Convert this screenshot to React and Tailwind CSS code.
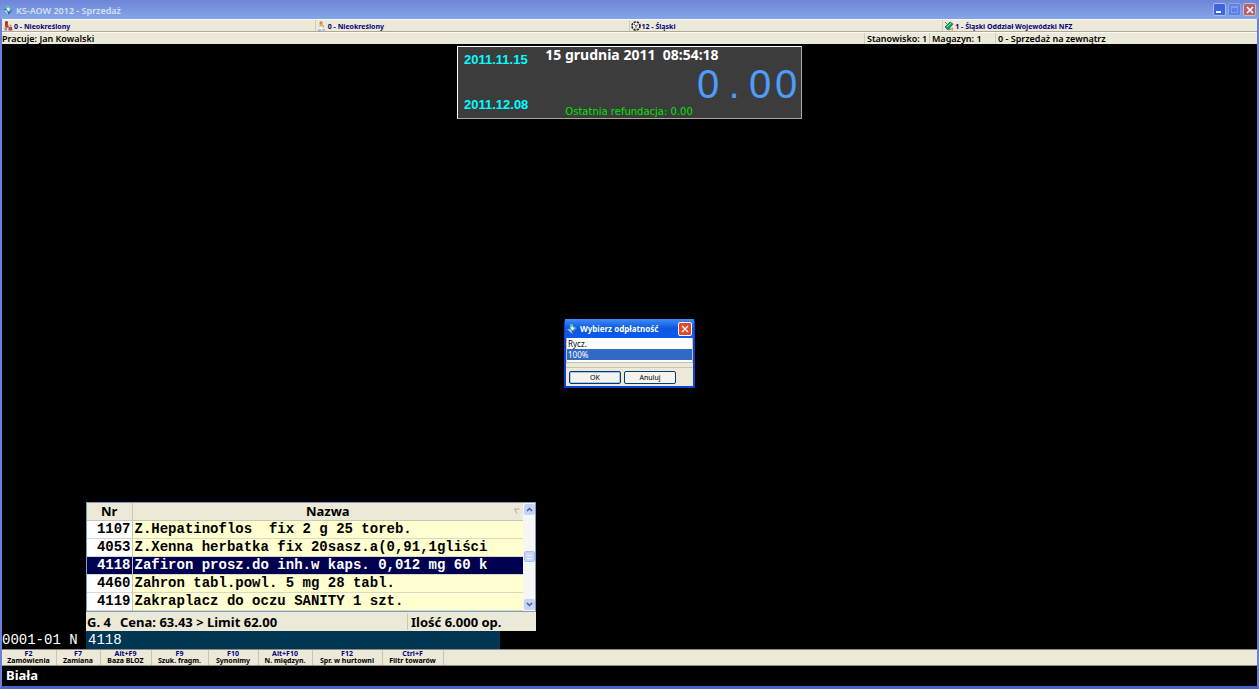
import React, { useState } from 'react'
import clsx from 'clsx'

const statusItems = [
  { icon: 'people', text: '0 - Nieokreślony' },
  { icon: 'person', text: '0 - Nieokreślony' },
  { icon: 'wheel', text: '12 - Śląski' },
  { icon: 'branch', text: '1 - Śląski Oddział Wojewódzki NFZ' },
]

const products = [
  { nr: '1107', name: 'Z.Hepatinoflos  fix 2 g 25 toreb.' },
  { nr: '4053', name: 'Z.Xenna herbatka fix 20sasz.a(0,91,1gliści' },
  { nr: '4118', name: 'Zafiron prosz.do inh.w kaps. 0,012 mg 60 k' },
  { nr: '4460', name: 'Zahron tabl.powl. 5 mg 28 tabl.' },
  { nr: '4119', name: 'Zakraplacz do oczu SANITY 1 szt.' },
]

const shortcuts = [
  { key: 'F2', label: 'Zamówienia', width: 'w-[55px]' },
  { key: 'F7', label: 'Zamiana', width: 'w-[44px]' },
  { key: 'Alt+F9', label: 'Baza BLOZ', width: 'w-[51px]' },
  { key: 'F9', label: 'Szuk. fragm.', width: 'w-[57px]' },
  { key: 'F10', label: 'Synonimy', width: 'w-[50px]' },
  { key: 'Alt+F10', label: 'N. międzyn.', width: 'w-[54px]' },
  { key: 'F12', label: 'Spr. w hurtowni', width: 'w-[70px]' },
  { key: 'Ctrl+F', label: 'Filtr towarów', width: 'w-[61px]' },
]

const AppIcon = () => (
  <svg viewBox="0 0 10 10" className="h-[10px] w-[10px] shrink-0" aria-hidden="true">
    <path d="M0 5l4-2 6 1-4.500 6z" fill="#2a6299" />
    <path d="M0 5l4 .5 1.500 4.500z" fill="#b9d3ea" />
    <path d="M3 0h2.500l1 2.500L10 4 6 7 3 5z" fill="#58b5c0" />
    <path d="M3.500 3L6 2.500 7 5 5 6z" fill="#e8fafa" />
  </svg>
)

const StatusIcon = ({ name }) => (
  <svg viewBox="0 0 10 10" className="h-[10px] w-[10px] shrink-0" aria-hidden="true">
    {name === 'people' && (
      <>
        <circle cx="3.500" cy="1.700" r="1.600" fill="#8a3b2c" />
        <path d="M2 3h3l.8 3-1.800 1L2 6z" fill="#c23a30" />
        <path d="M1.500 6.500h2.500v3H1.500z" fill="#7d8fae" />
        <circle cx="7.500" cy="4.800" r="1.200" fill="#d99a72" />
        <path d="M5.500 6h3.500L9.500 9.500h-4z" fill="#b8443a" />
      </>
    )}
    {name === 'person' && (
      <>
        <circle cx="4" cy="1.800" r="1.600" fill="#c98b4a" />
        <path d="M2.500 3h3l2 3-2 1h-3z" fill="#e0a96f" />
        <path d="M2.500 5.500h3l1 3.500H2z" fill="#eef3ff" />
        <path d="M1 9.200h3M5 8.900h3" stroke="#7fb6ea" strokeWidth="1.4" />
      </>
    )}
    {name === 'wheel' && (
      <>
        <circle cx="5" cy="5" r="4" fill="#fff" stroke="#222" strokeWidth="1.700" strokeDasharray="2.200 1" />
        <path d="M5 5L3 3M5 5l2.300-1.500M5 5v2.500" stroke="#444" strokeWidth="0.9" />
      </>
    )}
    {name === 'branch' && (
      <>
        <path d="M1 6l5-5 3 2-5 6z" fill="#13a06a" stroke="#0b5b45" strokeWidth="0.7" />
        <path d="M3 6l4-4" stroke="#a8efcf" strokeWidth="0.8" />
        <path d="M1 1l2 2M5 9l4-2" stroke="#555" strokeWidth="0.8" />
        <path d="M7 7.500l2 2" stroke="#d9b832" strokeWidth="1.3" />
      </>
    )}
  </svg>
)

const TitleBar = () => (
  <header className="flex h-[19px] shrink-0 items-center rounded-t-md bg-linear-to-b from-[#6d86d8] via-[#7a96df] to-[#84a5e8] px-[3px]">
    <AppIcon />
    <h1 className="ml-[3px] pt-[2px] text-[9px] font-semibold text-[#d5e0f8]">KS-AOW 2012 - Sprzedaż</h1>
    <div className="ml-auto flex gap-[2px]">
      <button aria-label="Minimalizuj" className="flex h-[13px] w-[13px] items-end rounded-xs border border-[#a9bdf2] bg-[#3b66e0] p-[2px]">
        <span className="h-[2px] w-[5px] bg-white" />
      </button>
      <button aria-label="Maksymalizuj" className="flex h-[13px] w-[13px] items-center justify-center rounded-xs border border-[#8ba6ee] bg-[#5f80e2]">
        <span className="h-[7px] w-[7px] border border-t-2 border-[#819eee]" />
      </button>
      <button aria-label="Zamknij" className="flex h-[13px] w-[13px] items-center justify-center rounded-xs border border-[#d3b6d2] bg-[#b5626e]">
        <svg viewBox="0 0 8 8" className="h-[8px] w-[8px]">
          <path d="M1 1l6 6M7 1L1 7" stroke="#fff" strokeWidth="1.5" />
        </svg>
      </button>
    </div>
  </header>
)

const StatusBars = () => (
  <div className="shrink-0 bg-[#ece9d8]">
    <div className="grid h-[13px] grid-cols-4 border-t border-b border-t-[#fbfaf4] border-b-[#aca899] text-[7px] leading-[9px] font-bold text-[#000080]">
      {statusItems.map((item, i) => (
        <div key={i} className="flex h-[11px] items-center gap-px border-r border-[#d0ccba] pl-px whitespace-nowrap last:border-r-0">
          <StatusIcon name={item.icon} />
          <span className="pt-[2px]">{item.text}</span>
        </div>
      ))}
    </div>
    <div className="flex h-[12px] items-center border-t border-[#fbfaf4] text-[9px] leading-[11px] font-semibold whitespace-nowrap text-black">
      <div className="flex-1">Pracuje: Jan Kowalski</div>
      <div className="w-[65px] border-l border-[#d0ccba] pl-[2px]">Stanowisko: 1</div>
      <div className="w-[66px] border-l border-[#d0ccba] pl-[2px]">Magazyn: 1</div>
      <div className="w-[262px] border-l border-[#d0ccba] pl-[2px]">0 - Sprzedaż na zewnątrz</div>
    </div>
  </div>
)

const SummaryPanel = () => (
  <section className="mx-auto flex h-[73px] w-[345px] shrink-0 border border-t-white border-r-[#aca899] border-b-[#aca899] border-l-white bg-[#3c3c3c]">
    <div className="flex flex-col justify-between py-[5px] pl-[6px] font-['Liberation_Sans',sans-serif] text-[13px] leading-[16px] font-bold text-[#00ffff]">
      <span>2011.11.15</span>
      <span>2011.12.08</span>
    </div>
    <div className="flex flex-1 flex-col justify-between pl-[17px]">
      <p className="text-[14px] leading-[15px] font-bold whitespace-pre text-white">15 grudnia 2011  08:54:18</p>
      <p className="flex justify-end pr-[2px] font-['Liberation_Sans',sans-serif] text-[40px] leading-[38px] text-[#4c9dfc]">
        {'0.00'.split('').map((char, i) => (
          <span key={i} className="w-[26px] text-center">{char}</span>
        ))}
      </p>
      <p className="pl-[20px] font-['DejaVu_Sans',sans-serif] text-[10px] leading-[12px] text-[#00e600]">Ostatnia refundacja: 0.00</p>
    </div>
  </section>
)

const PaymentDialog = () => {
  const [selected, setSelected] = useState('100%')

  return (
    <div role="dialog" aria-label="Wybierz odpłatność" className="absolute inset-x-0 top-[275px] mx-auto flex h-[69px] w-[131px] flex-col rounded-t-sm border-2 border-t-0 border-[#0f3fd0] bg-[#ece9d8]">
      <div className="-mx-px flex h-[19px] shrink-0 items-center bg-linear-to-b from-[#3f8cf8] via-[#0a57e0] to-[#0c5bee] px-[2px]">
        <AppIcon />
        <h2 className="ml-[3px] pt-px text-[8px] font-bold text-white">Wybierz odpłatność</h2>
        <button aria-label="Zamknij" className="ml-auto flex h-[14px] w-[14px] items-center justify-center rounded-xs border border-white bg-[#e0492a]">
          <svg viewBox="0 0 8 8" className="h-[8px] w-[8px]">
            <path d="M1 1l6 6M7 1L1 7" stroke="#fff" strokeWidth="1.3" />
          </svg>
        </button>
      </div>
      <div className="flex h-[25px] shrink-0 flex-col border-x border-b border-[#c8c4b4] bg-white text-[8px] leading-[11px] text-black">
        {['Rycz.', '100%'].map((option) => (
          <button
            key={option}
            onClick={() => setSelected(option)}
            className={clsx('block w-full px-px text-left', selected === option && 'bg-[#316ac5] text-white')}
          >
            {option}
          </button>
        ))}
      </div>
      <div className="mt-[4px] flex flex-1 items-center gap-[3px] border-t border-[#c8c4b4] px-[3px] text-[7px] text-black">
        <button className="h-[13px] w-[52px] rounded-xs border border-[#003c74] bg-[#f4f3ee] leading-[11px] shadow-[inset_0_0_0_1px_#a9c4f0]">OK</button>
        <button className="h-[13px] w-[52px] rounded-xs border border-[#003c74] bg-[#f4f3ee] leading-[11px]">Anuluj</button>
      </div>
    </div>
  )
}

const ScrollBar = () => (
  <div className="flex w-[12px] shrink-0 flex-col items-center justify-between bg-[#f6f6f2] py-px">
    <button aria-label="W górę" className="flex h-[11px] w-[11px] items-center justify-center rounded-xs bg-[#c3d3fd]">
      <svg viewBox="0 0 7 7" className="h-[7px] w-[7px]">
        <path d="M1 5l2.500-2.500L6 5" fill="none" stroke="#4d6185" strokeWidth="1.5" />
      </svg>
    </button>
    <span className="flex h-[11px] w-[11px] items-center justify-center rounded-xs border border-[#a9c0f5] bg-[#c8d6fb]">
      <span className="h-[4px] w-[5px] border-y border-[#eef4fe]" />
    </span>
    <button aria-label="W dół" className="flex h-[11px] w-[11px] items-center justify-center rounded-xs bg-[#c3d3fd]">
      <svg viewBox="0 0 7 7" className="h-[7px] w-[7px]">
        <path d="M1 2l2.500 2.500L6 2" fill="none" stroke="#4d6185" strokeWidth="1.5" />
      </svg>
    </button>
  </div>
)

const ProductList = () => (
  <section className="ml-[84px] w-[450px] bg-[#ece9d8] text-black">
    <div className="flex border border-[#7f9db9]">
      <table className="flex-1 table-fixed border-collapse">
        <thead>
          <tr className="h-[18px] bg-[#ece9d8] text-[13px] leading-[16px] font-bold">
            <th className="w-[45px] border-r border-b border-[#cbc7b8] p-0">Nr</th>
            <th className="border-b border-[#cbc7b8] p-0">
              <div className="flex items-center">
                <span className="flex-1 pl-[9px]">Nazwa</span>
                <svg viewBox="0 0 6 6" className="mr-[3px] h-[6px] w-[6px]" aria-hidden="true">
                  <path d="M5.500 1H.5L3 5.500" fill="none" stroke="#aca899" />
                </svg>
              </div>
            </th>
          </tr>
        </thead>
        <tbody className="font-['Liberation_Mono',monospace] text-[14px] leading-[17px] font-bold">
          {products.map((p) => (
            <tr
              key={p.nr}
              className={clsx('h-[18px] border-b border-[#d8d8cc]', p.nr === '4118' ? 'bg-[#000050] text-white' : 'bg-[#ffffd0]')}
            >
              <td className={clsx('border-r border-[#cbc7b8] p-0 pr-px text-right', p.nr !== '4118' && 'bg-white')}>{p.nr}</td>
              <td className="p-0 pl-[2px] whitespace-pre">{p.name}</td>
            </tr>
          ))}
        </tbody>
      </table>
      <ScrollBar />
    </div>
    <div className="flex h-[19px] items-center text-[13px] leading-[16px] font-bold">
      <span className="w-[34px] pl-px">G. 4</span>
      <span className="flex-1">Cena: 63.43 &gt; Limit 62.00</span>
      <span className="w-[129px] border-l border-[#cbc7b8] pl-[3px]">Ilość 6.000 op.</span>
    </div>
  </section>
)

const ShortcutBar = () => (
  <nav className="flex h-[17px] shrink-0 border-y border-[#8d8a7e] bg-[#ece9d8]">
    {shortcuts.map((s) => (
      <button
        key={s.key}
        className={clsx('flex flex-col items-center justify-start border-r border-[#c8c4b4] pr-px text-[7px] leading-[7px] font-bold whitespace-nowrap text-black', s.width)}
      >
        <span className="text-[#000080]">{s.key}</span>
        <span>{s.label}</span>
      </button>
    ))}
  </nav>
)

const App = () => {
  const [code, setCode] = useState('4118')

  return (
    <div className="flex min-h-screen flex-col bg-[#6f86dc] font-['Noto_Sans',sans-serif]">
      <TitleBar />
      <div className="flex flex-1 flex-col border-x-2 border-b-3 border-x-[#6a7fd8] border-b-[#4a62cc] bg-black">
        <StatusBars />
        <main className="relative flex flex-1 flex-col pt-[2px]">
          <SummaryPanel />
          <PaymentDialog />
          <div className="mt-auto">
            <ProductList />
            <div className="flex h-[18px] items-center font-['Liberation_Mono',monospace] text-[14px] leading-[17px] text-white">
              <label htmlFor="code" className="w-[84px] whitespace-nowrap">0001-01 N</label>
              <input
                id="code"
                value={code}
                onChange={(e) => setCode(e.target.value)}
                className="h-full w-[414px] bg-[#003553] pl-[2px] outline-none"
              />
            </div>
          </div>
        </main>
        <ShortcutBar />
        <footer className="flex h-[20px] shrink-0 items-center pl-[4px] text-[13px] font-bold text-white">Biała</footer>
      </div>
    </div>
  )
}

export default App
